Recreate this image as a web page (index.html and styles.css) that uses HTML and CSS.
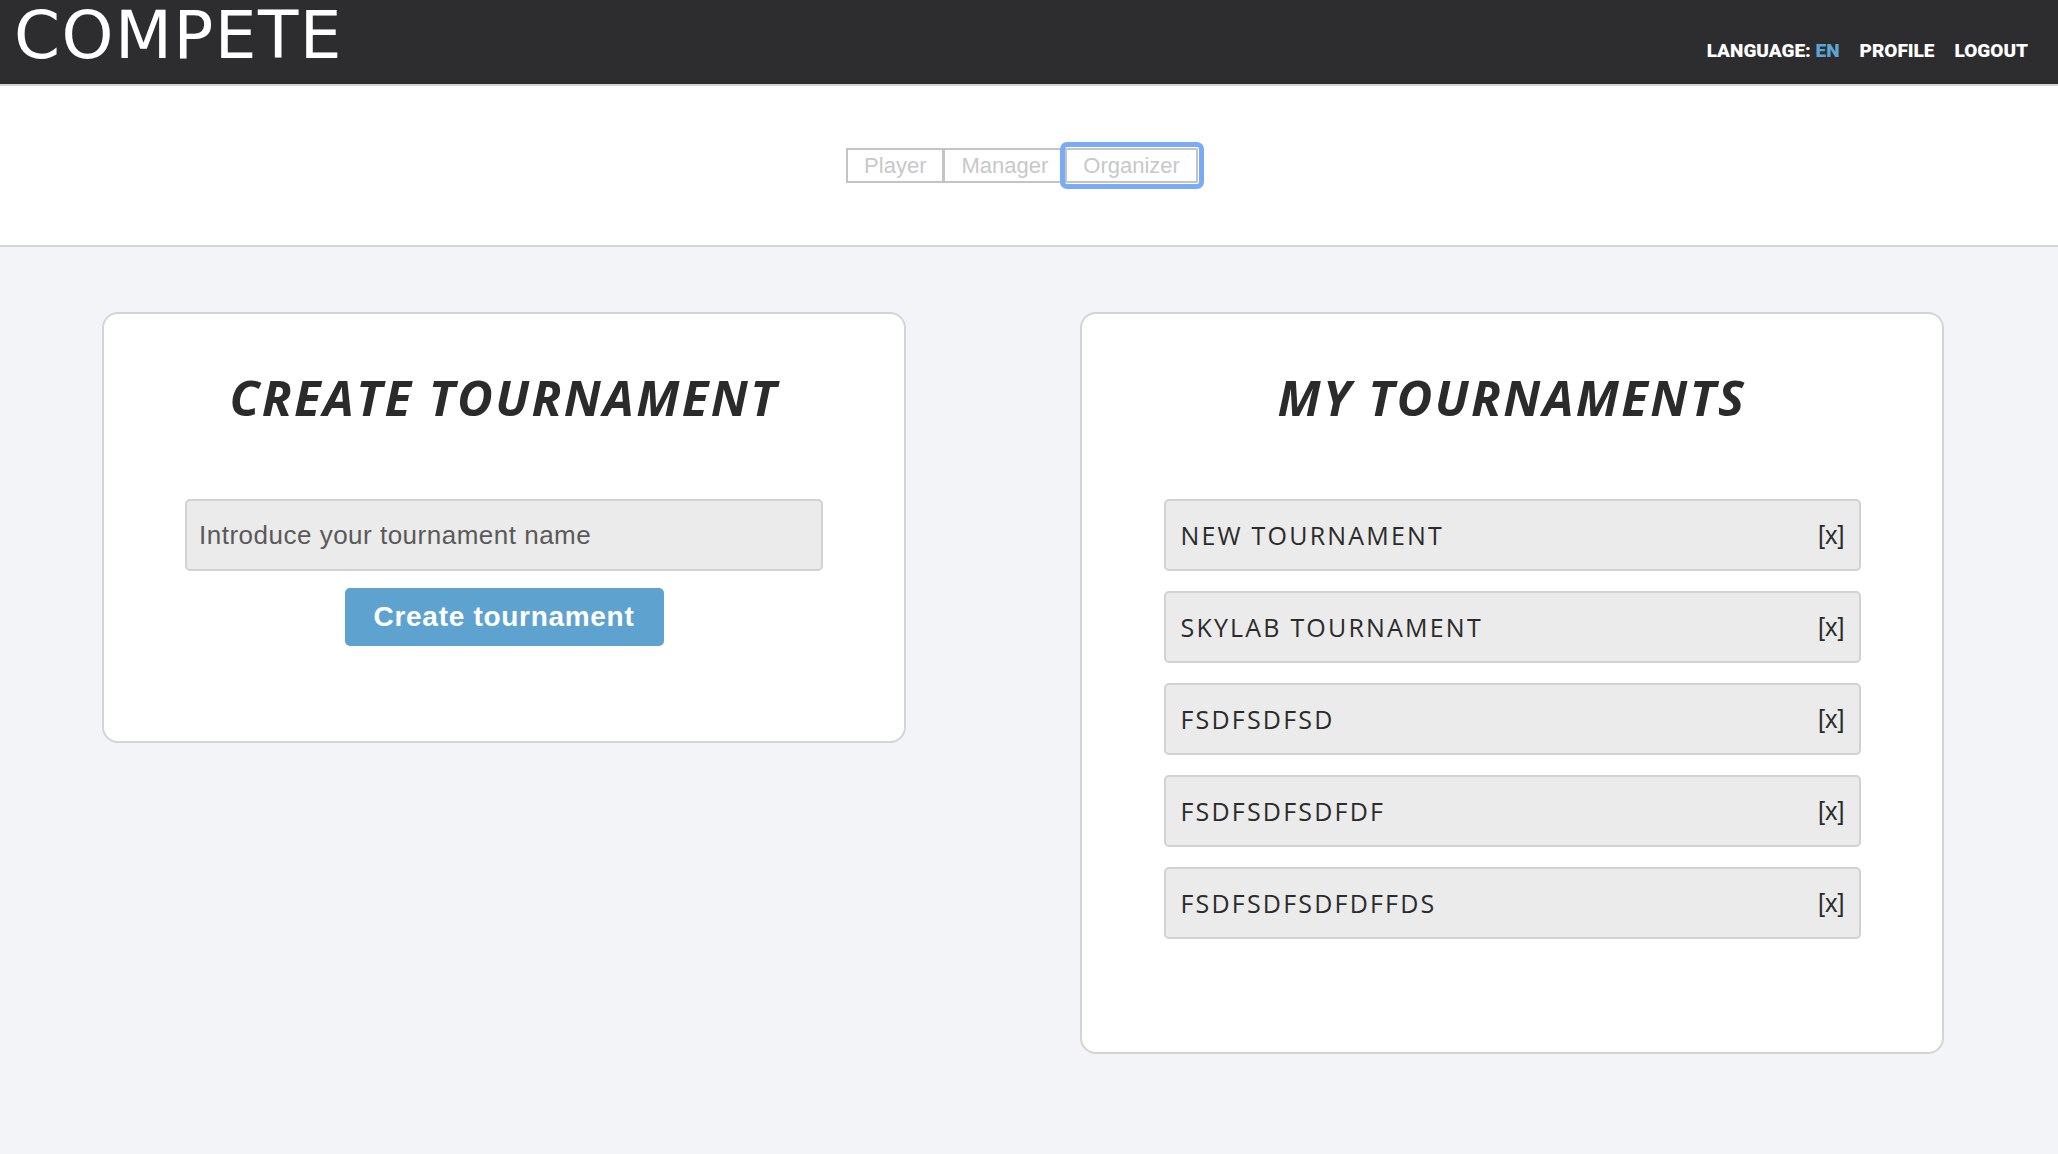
FILE: index.html
```html
<!DOCTYPE html>
<html lang="en">
<head>
<meta charset="utf-8">
<title>Compete</title>
<link rel="stylesheet" href="styles.css">
</head>
<body>
<header class="topbar">
  <div class="logo">COMPETE</div>
  <nav class="nav">
    <a class="nav-link">LANGUAGE: <span class="lang">EN</span></a>
    <a class="nav-link">PROFILE</a>
    <a class="nav-link">LOGOUT</a>
  </nav>
</header>
<section class="roles">
  <div class="tabs">
    <button class="tab">Player</button><button class="tab">Manager</button><button class="tab tab-active">Organizer</button>
  </div>
</section>
<main class="content">
  <div class="card card-create">
    <h2 class="card-title">CREATE TOURNAMENT</h2>
    <input class="name-input" type="text" placeholder="Introduce your tournament name">
    <button class="create-btn">Create tournament</button>
  </div>
  <div class="card card-list">
    <h2 class="card-title">MY TOURNAMENTS</h2>
    <ul class="t-list">
      <li class="t-item"><span class="t-name">NEW TOURNAMENT</span><span class="t-del">[x]</span></li>
      <li class="t-item"><span class="t-name">SKYLAB TOURNAMENT</span><span class="t-del">[x]</span></li>
      <li class="t-item"><span class="t-name">FSDFSDFSD</span><span class="t-del">[x]</span></li>
      <li class="t-item"><span class="t-name">FSDFSDFSDFDF</span><span class="t-del">[x]</span></li>
      <li class="t-item"><span class="t-name">FSDFSDFSDFDFFDS</span><span class="t-del">[x]</span></li>
    </ul>
  </div>
</main>
</body>
</html>
```

FILE: styles.css
```css
* { box-sizing: border-box; }
html, body { margin: 0; padding: 0; }
body {
  font-family: "Liberation Sans", Arial, sans-serif;
  background: #f3f4f7;
  min-height: 1154px;
}
.topbar {
  height: 86px;
  background: #2d2d2f;
  border-bottom: 2px solid #d4d4d4;
  display: flex;
  justify-content: space-between;
  align-items: flex-start;
  padding: 0 30px 0 14px;
}
.logo {
  color: #fff;
  font-family: "DejaVu Sans", sans-serif;
  font-size: 66px;
  line-height: 1;
  margin-top: 3px;
  letter-spacing: 1.5px;
}
.nav {
  display: flex;
  gap: 20px;
  margin-top: 39px;
}
.nav-link {
  color: #fff;
  font-family: "Roboto", sans-serif;
  font-weight: 900;
  font-size: 19px;
  line-height: 24px;
  letter-spacing: 0;
}
.lang { color: #5ba4d4; }
.roles {
  background: #fff;
  height: 161px;
  border-bottom: 2px solid #d4d4d4;
  display: flex;
  justify-content: center;
  padding-top: 62px;
  padding-right: 14px;
}
.tabs { display: flex; height: 35px; }
.tab {
  font-family: "Liberation Sans", Arial, sans-serif;
  font-size: 22px;
  color: #c8c8c8;
  background: #fff;
  border: 2px solid #c4c4c4;
  height: 35px;
  padding: 0 16px;
  margin: 0;
  line-height: 31px;
}
.tab + .tab { border-left-width: 1px; }
.tab-active {
  outline: 5px solid #7aabf7;
  outline-offset: 1px;
  border-radius: 1px;
}
.content {
  display: grid;
  grid-template-columns: 804px 864px;
  column-gap: 174px;
  align-items: start;
  padding: 65px 0 0 102px;
}
.card {
  background: #fff;
  border: 2px solid #d4d4d4;
  border-radius: 16px;
  display: flex;
  flex-direction: column;
  align-items: center;
  padding-top: 48px;
}
.card-create { height: 431px; }
.card-list { height: 742px; }
.card-title {
  margin: 0;
  font-family: "Open Sans", sans-serif;
  font-style: italic;
  font-weight: 700;
  font-size: 49px;
  line-height: 70px;
  color: #2b2b2b;
  letter-spacing: 2.4px;
  height: 70px;
}
.name-input {
  margin-top: 67px;
  width: 638px;
  height: 72px;
  background: #ebebeb;
  border: 2px solid #d2d2d2;
  border-radius: 5px;
  padding: 0 12px;
  font-family: "Liberation Sans", Arial, sans-serif;
  font-size: 26px;
  letter-spacing: 0.5px;
  color: #555;
  outline: none;
}
.name-input::placeholder { color: #5a5a5a; }
.create-btn {
  margin-top: 17px;
  width: 319px;
  height: 58px;
  background: #5ea3d0;
  border: none;
  border-radius: 5px;
  color: #fff;
  font-family: "Liberation Sans", Arial, sans-serif;
  font-weight: 700;
  font-size: 28px;
  letter-spacing: 0.7px;
  padding: 0;
}
.t-list {
  list-style: none;
  margin: 67px 0 0 0;
  padding: 0;
  width: 697px;
  display: flex;
  flex-direction: column;
  gap: 20px;
}
.t-item {
  height: 72px;
  background: #ebebeb;
  border: 2px solid #d2d2d2;
  border-radius: 5px;
  display: flex;
  justify-content: space-between;
  align-items: center;
  padding: 0 14px 0 15px;
}
.t-name {
  font-family: "Open Sans", sans-serif;
  font-weight: 500;
  font-size: 25px;
  letter-spacing: 2.2px;
  color: #2b2b2b;
}
.t-del {
  font-family: "Liberation Sans", Arial, sans-serif;
  font-size: 25px;
  color: #2b2b2b;
}
```
